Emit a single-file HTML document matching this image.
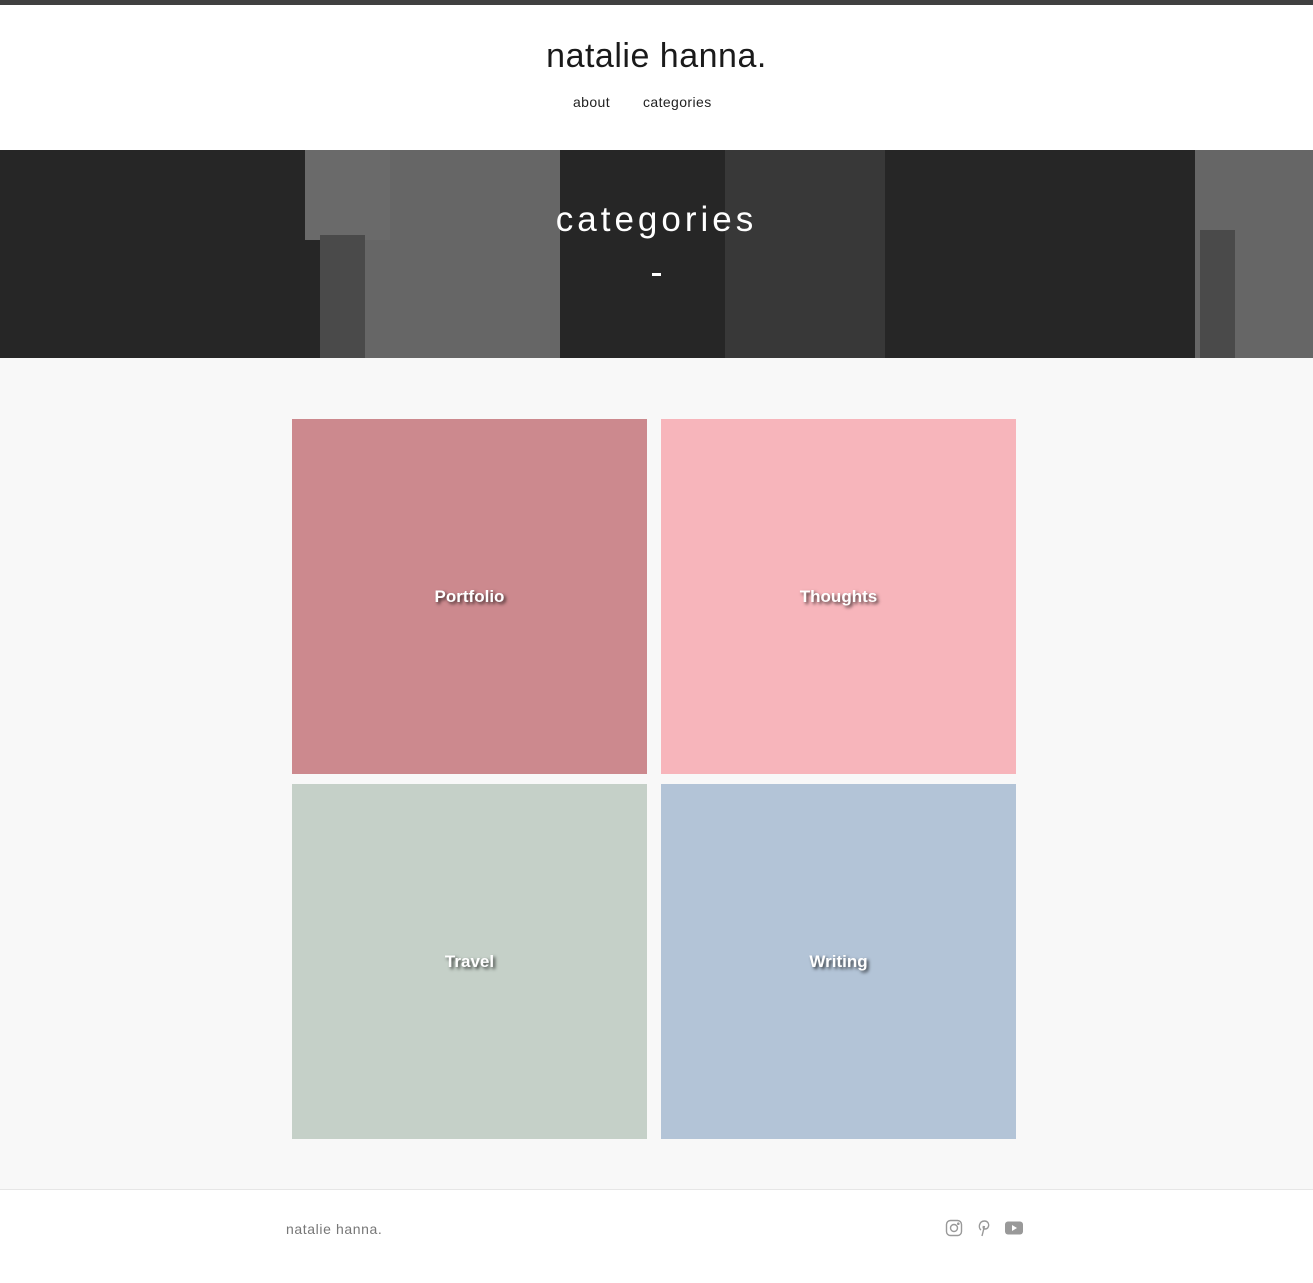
<!DOCTYPE html>
<html><head><style>
*{margin:0;padding:0;box-sizing:border-box}
body{width:1313px;height:1283px;background:#f8f8f8;font-family:"Liberation Sans",sans-serif;position:relative;overflow:hidden}
.top{position:absolute;left:0;top:0;width:1313px;height:5px;background:#404040}
header{position:absolute;top:5px;left:0;width:1313px;height:145px;background:#fff}
h1{position:absolute;top:32px;width:100%;text-align:center;font-weight:400;font-size:34px;color:#1a1a1a;letter-spacing:0.5px}
nav{position:absolute;top:89px;left:0;width:100%;font-size:14px;color:#222}
nav span{position:absolute;letter-spacing:0.4px}
.hero{position:absolute;top:150px;left:0;width:1313px;height:208px;background:#262626;overflow:hidden}
.hero div{position:absolute}
.hero h2{position:absolute;top:50px;width:100%;text-align:center;color:#fff;font-weight:400;font-size:35px;letter-spacing:4px}
.dash{left:652px;top:123px;width:9px;height:3px;background:#fff}
.tile{position:absolute;width:355px;height:355px;display:flex;align-items:center;justify-content:center;color:#fff;font-weight:bold;font-size:17px;text-shadow:2px 2px 3px rgba(0,0,0,.7)}
footer{position:absolute;top:1189px;left:0;width:1313px;height:94px;background:#fff;border-top:1px solid #e6e6e6}
</style></head><body>
<div class="top"></div>
<header><h1>natalie hanna.</h1><nav><span style="left:573px">about</span><span style="left:643px">categories</span></nav></header>
<div class="hero">
<div style="left:725px;top:0;width:160px;height:208px;background:#383838"></div>
<div style="left:330px;top:0;width:230px;height:208px;background:#666"></div>
<div style="left:305px;top:0;width:85px;height:90px;background:#6a6a6a"></div>
<div style="left:320px;top:85px;width:45px;height:123px;background:#4a4a4a"></div>
<div style="left:1195px;top:0;width:118px;height:208px;background:#666"></div>
<div style="left:1200px;top:80px;width:35px;height:128px;background:#4a4a4a"></div>
<h2>categories</h2>
<div class="dash"></div>
</div>
<div class="tile" style="left:292px;top:419px;background:#cc898e">Portfolio</div>
<div class="tile" style="left:661px;top:419px;background:#f7b5bb">Thoughts</div>
<div class="tile" style="left:292px;top:784px;background:#c5d0c8">Travel</div>
<div class="tile" style="left:661px;top:784px;background:#b3c4d7">Writing</div>
<footer>
<div style="position:absolute;left:286px;top:31px;font-size:14px;color:#777;letter-spacing:0.6px">natalie hanna.</div>
<svg style="position:absolute;left:945px;top:29px" width="18" height="18" viewBox="0 0 18 18" fill="none" stroke="#999" stroke-width="1.4"><rect x="1.5" y="1.5" width="15" height="15" rx="4"/><circle cx="9" cy="9" r="3.5"/><circle cx="13.3" cy="4.7" r=".6" fill="#999"/></svg>
<svg style="position:absolute;left:977px;top:29px" width="14" height="18" viewBox="0 0 14 18" fill="none" stroke="#999" stroke-width="1.4"><path d="M5 17 L7.5 7 M4 11 C1 9 2 2 7.5 2 C13 2 13 10 8 10 C6 10 6 8 6.5 7"/></svg>
<svg style="position:absolute;left:1005px;top:31px" width="18" height="14" viewBox="0 0 18 14"><rect x="0" y="0.5" width="18" height="13" rx="3" fill="#999"/><path d="M7 4 L12 7 L7 10Z" fill="#fff"/></svg>
</footer>
</body></html>
